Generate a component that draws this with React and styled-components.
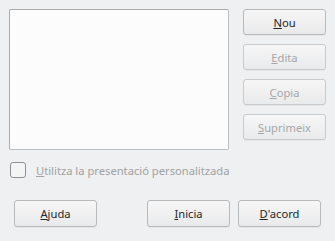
import React from 'react'
import styled, { createGlobalStyle } from 'styled-components'

const Global = createGlobalStyle`
  html, body {
    margin: 0;
    padding: 0;
    background: #eff0f1;
  }
  body {
    font-family: "Noto Sans", "Open Sans", sans-serif;
    font-size: 11.2px;
    color: #232627;
  }
`

const Dialog = styled.div`
  width: 335px;
  height: 241px;
  box-sizing: border-box;
  padding: 9px 9px 0 9px;
  display: flex;
  flex-direction: column;
`

const Top = styled.div`
  display: flex;
  gap: 14px;
`

const ListBox = styled.div`
  width: 220px;
  height: 141px;
  box-sizing: border-box;
  background: #fcfcfc;
  border: 1px solid #bcbebf;
  border-top-color: #a9abac;
  border-left-color: #a9abac;
  border-radius: 2px;
`

const SideButtons = styled.div`
  display: flex;
  flex-direction: column;
  gap: 9px;
`

const Button = styled.button`
  width: 83px;
  height: ${({ tall }) => (tall ? 27 : 26)}px;
  box-sizing: border-box;
  padding: 0;
  font-family: inherit;
  font-size: 11.2px;
  color: ${({ disabled }) => (disabled ? '#a5a7a8' : '#232627')};
  background: linear-gradient(#f6f6f7, #e9eaeb);
  border: 1px solid ${({ disabled }) => (disabled ? '#c9cacb' : '#b7b9ba')};
  border-radius: 3px;
  box-shadow: 0 1px 0 rgba(0, 0, 0, 0.04);

  u {
    text-decoration: underline;
    text-underline-offset: 1px;
  }
`

const CheckRow = styled.label`
  display: flex;
  align-items: center;
  gap: 10px;
  margin: 12px 0 0 1px;
  color: #a0a2a3;
`

const CheckBox = styled.span`
  width: 16px;
  height: 16px;
  box-sizing: border-box;
  border: 1px solid #8e9091;
  border-radius: 3px;
  background: #f3f4f4;
`

const Bottom = styled.div`
  display: flex;
  margin: 22px 0 0 5px;
  gap: 8px;

  & > :first-child {
    margin-right: 42px;
  }
`

export default function App() {
  return (
    <>
      <Global />
      <Dialog>
        <Top>
          <ListBox />
          <SideButtons>
            <Button><u>N</u>ou</Button>
            <Button disabled><u>E</u>dita</Button>
            <Button disabled><u>C</u>opia</Button>
            <Button disabled><u>S</u>uprimeix</Button>
          </SideButtons>
        </Top>
        <CheckRow>
          <CheckBox />
          <span><u>U</u>tilitza la presentació personalitzada</span>
        </CheckRow>
        <Bottom>
          <Button tall><u>A</u>juda</Button>
          <Button tall><u>I</u>nicia</Button>
          <Button tall><u>D</u>'acord</Button>
        </Bottom>
      </Dialog>
    </>
  )
}
